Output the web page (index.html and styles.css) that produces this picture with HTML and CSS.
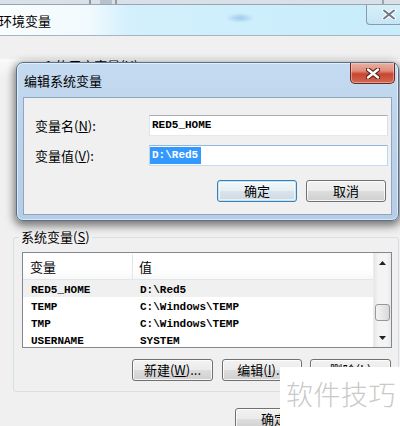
FILE: index.html
```html
<!DOCTYPE html>
<html lang="zh-CN">
<head>
<meta charset="utf-8">
<title>编辑系统变量</title>
<link rel="stylesheet" href="styles.css">
</head>
<body>
<div class="screen">
  <div class="backstrip"></div>
  <div class="outer">
    <div class="otitle">
      <span class="otext">环境变量</span>
      <span class="oclose">
        <svg width="14" height="11" viewBox="0 0 14 11"><path d="M2 1.5 L12 9.5 M12 1.5 L2 9.5" stroke="#ffffff" stroke-width="4" stroke-linecap="round"/><path d="M2 1.5 L12 9.5 M12 1.5 L2 9.5" stroke="#6d7884" stroke-width="2" stroke-linecap="round"/></svg>
      </span>
    </div>
    <div class="obody">
      <div class="usergroup">1 的用户变量(<u>U</u>)</div>
      <fieldset class="sysgroup">
        <legend>系统变量(<u>S</u>)</legend>
        <div class="list">
          <div class="lmain">
            <div class="lhead"><div class="c1">变量</div><div class="c2">值</div></div>
            <div class="row sel"><div class="c1">RED5_HOME</div><div class="c2">D:\Red5</div></div>
            <div class="row"><div class="c1">TEMP</div><div class="c2">C:\Windows\TEMP</div></div>
            <div class="row"><div class="c1">TMP</div><div class="c2">C:\Windows\TEMP</div></div>
            <div class="row"><div class="c1">USERNAME</div><div class="c2">SYSTEM</div></div>
          </div>
          <div class="vscroll">
            <div class="sarrow"><svg width="7" height="4" viewBox="0 0 7 4"><path d="M0 4 L3.5 0 L7 4 Z" fill="#222"/></svg></div>
            <div class="strack"><div class="thumb"></div></div>
            <div class="sarrow"><svg width="7" height="4" viewBox="0 0 7 4"><path d="M0 0 L3.5 4 L7 0 Z" fill="#222"/></svg></div>
          </div>
        </div>
        <div class="gbtns">
          <div class="btn w81">新建(<u>W</u>)...</div>
          <div class="btn w80">编辑(<u>I</u>)...</div>
          <div class="btn w81">删除(<u>L</u>)</div>
        </div>
      </fieldset>
      <div class="obtns">
        <div class="btn w80">确定</div>
        <div class="btn w80">取消</div>
      </div>
    </div>
  </div>

  <div class="dialog">
    <div class="dtitle">
      <span class="dtext">编辑系统变量</span>
      <span class="dclose">
        <svg width="14" height="11" viewBox="0 0 14 11"><path d="M2 1.5 L12 9.5 M12 1.5 L2 9.5" stroke="#5a1c14" stroke-width="4.6" stroke-linecap="round"/><path d="M2 1.5 L12 9.5 M12 1.5 L2 9.5" stroke="#ffffff" stroke-width="2.4" stroke-linecap="round"/></svg>
      </span>
    </div>
    <div class="client">
      <div class="frow">
        <div class="flabel">变量名(<u>N</u>):</div>
        <div class="finput">RED5_HOME</div>
      </div>
      <div class="frow second">
        <div class="flabel">变量值(<u>V</u>):</div>
        <div class="finput focus"><span class="selected">D:\Red5</span></div>
      </div>
      <div class="dbtns">
        <div class="btn w80 default">确定</div>
        <div class="btn w80">取消</div>
      </div>
    </div>
  </div>

  <div class="watermark">软件技巧</div>
</div>
</body>
</html>
```

FILE: styles.css
```css
* { box-sizing: border-box; }

body {
  margin: 0;
  width: 400px;
  height: 426px;
  overflow: hidden;
  background: #f0f0f0;
  font-family: "Noto Sans CJK SC", "Liberation Sans", sans-serif;
  font-size: 13px;
  color: #000;
}

u { text-decoration: underline; }

.screen {
  position: relative;
  width: 400px;
  height: 426px;
  overflow: hidden;
}

.backstrip {
  height: 5px;
  background:
    linear-gradient(90deg, transparent 89px, #8f9aa6 89px, #8f9aa6 91px, transparent 91px, transparent 100px, #b7c1cb 100px, #b7c1cb 112px, transparent 112px, transparent 115px, #8f9aa6 115px, #8f9aa6 117px, transparent 117px, transparent 382px, #9aa5b0 382px, #9aa5b0 384px, transparent 384px),
    #d9e0e7;
  border-bottom: 1px solid #98a4b0;
}

.otitle {
  height: 31px;
  display: flex;
  justify-content: space-between;
  align-items: center;
  background:
    radial-gradient(ellipse 14px 5px at 240px 13px, rgba(120, 170, 230, 0.55), transparent),
    linear-gradient(90deg, #f9fdfe 0%, #f1fafe 22%, #d3f0fc 32%, #c7ecfb 100%);
  border-bottom: 1px solid #a7b4c1;
}

.otext {
  margin-left: -1px;
  padding-top: 2px;
  line-height: 14px;
  color: #000;
}

.oclose {
  align-self: flex-start;
  width: 36px;
  height: 20px;
  margin-right: -2px;
  border: 1px solid #8c9aa8;
  border-top: none;
  border-radius: 0 0 4px 4px;
  background: linear-gradient(#d8eff9, #c4e6f6);
  display: flex;
  align-items: center;
  justify-content: center;
  padding-left: 10px;
}

.obody {
  background: linear-gradient(#fafafa 0px, #f0f0f0 20px);
  height: 390px;
}

.usergroup {
  margin-top: 23px;
  margin-left: 45px;
  line-height: 14px;
  height: 14px;
}

.sysgroup {
  margin: 157px 1px 0 13px;
  padding: 8px 6px 10px 8px;
  border: 1px solid #d5dfe5;
  border-radius: 3px;
  min-inline-size: 0;
}

.sysgroup legend {
  padding: 0 2px;
  margin-left: -3px;
  line-height: 14px;
  font-size: 13px;
}

.list {
  height: 96px;
  border: 1px solid #828790;
  background: #fff;
  display: flex;
}

.lmain {
  flex: 1;
  overflow: hidden;
}

.lhead {
  height: 27px;
  display: flex;
  background: linear-gradient(#ffffff, #ffffff 60%, #f7f8f9);
  border-bottom: 1px solid #e3e5e7;
  line-height: 26px;
  padding-top: 1px;
}

.lhead .c1 {
  width: 110px;
  padding-left: 7px;
  border-right: 1px solid #e3e5e7;
}

.lhead .c2 {
  padding-left: 6px;
}

.row {
  height: 17px;
  display: flex;
  font-family: "Liberation Mono", "DejaVu Sans Mono", monospace;
  font-size: 11px;
  font-weight: bold;
  line-height: 17px;
  padding-top: 2px;
  white-space: nowrap;
}

.row.sel { background: #f0f0f0; }

.row .c1 { width: 111px; padding-left: 8px; }
.row .c2 { padding-left: 6px; }

.vscroll {
  width: 18px;
  display: flex;
  flex-direction: column;
  background: linear-gradient(90deg, #e6e6e6, #f4f4f4 25%, #f4f4f4 75%, #e9e9e9);
  border-left: 1px solid #ececec;
}

.sarrow {
  height: 19px;
  display: flex;
  align-items: center;
  justify-content: center;
}

.strack {
  flex: 1;
  padding-top: 32px;
}

.thumb {
  margin: 0 1px;
  height: 17px;
  border: 1px solid #979797;
  border-radius: 3px;
  background: linear-gradient(90deg, #f3f3f3, #e8e8e8 50%, #d8d8d8);
}

.gbtns {
  margin-top: 11px;
  display: flex;
  justify-content: flex-end;
  gap: 9px;
  padding-right: 1px;
}

.gbtns .btn:last-child { margin-left: -1px; }

.btn {
  height: 22px;
  border: 1px solid #707070;
  border-radius: 3px;
  background: linear-gradient(#f2f2f2 0%, #ebebeb 48%, #dddddd 52%, #cfcfcf 100%);
  box-shadow: inset 0 0 0 1px rgba(255, 255, 255, 0.8);
  display: flex;
  align-items: center;
  justify-content: center;
  line-height: 14px;
  white-space: nowrap;
  overflow: hidden;
}

.w80 { width: 80px; }
.w81 { width: 81px; }

.obtns {
  margin-top: 16px;
  padding-left: 235px;
  display: flex;
  gap: 9px;
}

/* Dialog window over the environment variables window */
.dialog {
  position: absolute;
  left: 16px;
  top: 62px;
  width: 383px;
  height: 159px;
  border: 1px solid #56708c;
  border-radius: 7px;
  background: linear-gradient(#c5dbf1 0%, #bcd3ec 40%, #b5cde7 100%);
  box-shadow:
    inset 0 0 0 1px rgba(255, 255, 255, 0.55),
    0 3px 9px 2px rgba(0, 0, 0, 0.5);
}

.dtitle {
  height: 34px;
  display: flex;
  justify-content: space-between;
}

.dtext {
  padding-left: 7px;
  padding-top: 11px;
  line-height: 14px;
}

.dclose {
  width: 45px;
  height: 21px;
  margin-right: 3px;
  border: 1px solid #6b2a20;
  border-top: none;
  border-radius: 0 0 5px 5px;
  background: linear-gradient(#eab0a2 0%, #dd8c7b 40%, #c9452f 55%, #d06a55 100%);
  box-shadow: inset 0 0 0 1px rgba(255, 210, 200, 0.5);
  display: flex;
  align-items: center;
  justify-content: center;
}

.client {
  margin: 0 6px;
  height: 118px;
  background: #f0f0f0;
  border: 1px solid #90a6bd;
  padding: 17px 3px 0 11px;
}

.frow {
  display: flex;
  align-items: center;
  height: 21px;
}

.frow.second { margin-top: 9px; }

.flabel {
  width: 114px;
  line-height: 14px;
}

.finput {
  flex: 1;
  height: 21px;
  border: 1px solid;
  border-color: #abadb3 #dbdfe6 #e3e9ef #e2e3ea;
  background: #fff;
  font-family: "Liberation Mono", "DejaVu Sans Mono", monospace;
  font-size: 11px;
  font-weight: bold;
  line-height: 19px;
  padding-left: 2px;
  white-space: nowrap;
}

.finput.focus {
  border-color: #8fb6dc #bcd6ee #c5dcf1 #bcd6ee;
  padding-left: 0;
  padding-top: 1px;
  line-height: 17px;
}

.selected {
  display: inline-block;
  background: #3399ff;
  color: #fff;
  padding: 0 3px 0 2px;
  height: 17px;
}

.dbtns {
  margin-top: 14px;
  display: flex;
  justify-content: flex-end;
  gap: 9px;
  padding-right: 2px;
}

.btn.default {
  border-color: #3c7fb1;
  box-shadow: inset 0 0 0 1px #bfe4f9, inset 0 0 0 2px rgba(255, 255, 255, 0.6);
  background: linear-gradient(#f1f6f9 0%, #e8eff4 48%, #d9e3ea 52%, #cdd9e2 100%);
}

/* Watermark lying over the bottom-right corner */
.watermark {
  position: absolute;
  left: 280px;
  top: 367px;
  right: 0;
  bottom: 0;
  background: #fff;
  color: #c9c9c9;
  font-family: "Noto Sans CJK SC", sans-serif;
  font-weight: 300;
  font-size: 27px;
  letter-spacing: 0.5px;
  line-height: 27px;
  padding: 13px 0 0 6px;
  white-space: nowrap;
}
```
